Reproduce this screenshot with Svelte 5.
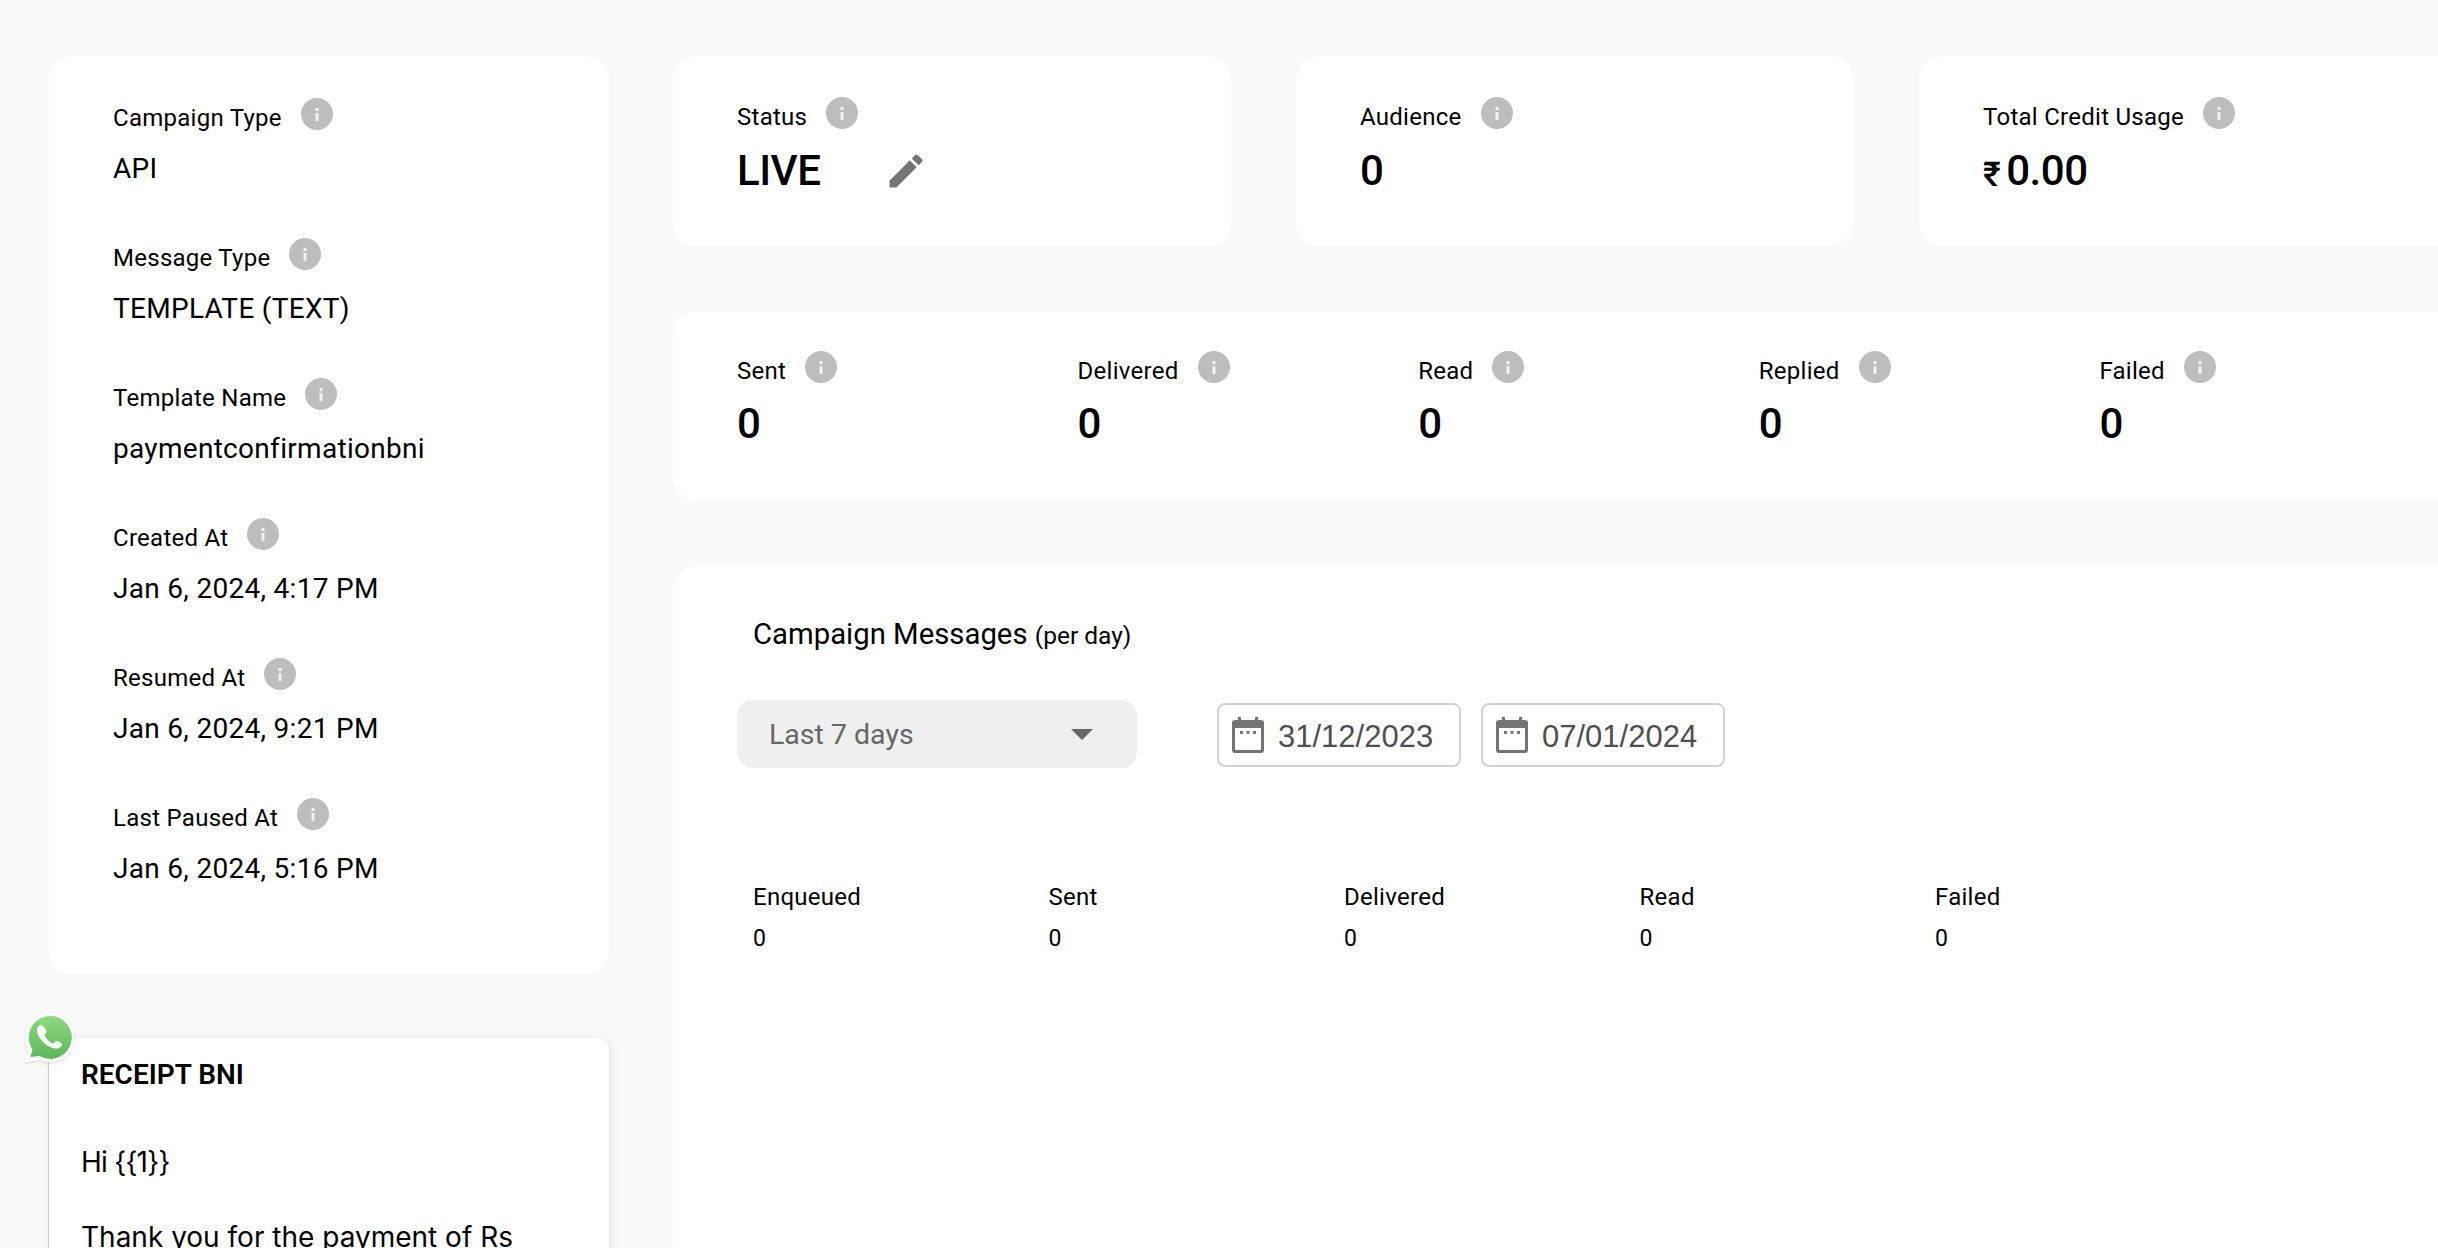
<script>
  const details = [
    { label: "Campaign Type", value: "API" },
    { label: "Message Type", value: "TEMPLATE (TEXT)" },
    { label: "Template Name", value: "paymentconfirmationbni" },
    { label: "Created At", value: "Jan 6, 2024, 4:17 PM" },
    { label: "Resumed At", value: "Jan 6, 2024, 9:21 PM" },
    { label: "Last Paused At", value: "Jan 6, 2024, 5:16 PM" }
  ];
  const funnel = ["Sent", "Delivered", "Read", "Replied", "Failed"];
  const daily = ["Enqueued", "Sent", "Delivered", "Read", "Failed"];
  const dates = ["31/12/2023", "07/01/2024"];
</script>

{#snippet info()}
  <svg class="info" viewBox="0 0 32 32" aria-hidden="true">
    <circle cx="16" cy="16" r="16" fill="#bdbdbd" />
    <rect x="14.5" y="15" width="3" height="8" fill="#f2f2f2" />
    <rect x="14.5" y="10" width="3" height="3" fill="#f2f2f2" />
  </svg>
{/snippet}

<div class="page">
  <aside class="left">
    <section class="card details">
      {#each details as item}
        <div class="detail">
          <div class="label">{item.label}{@render info()}</div>
          <div class="value">{item.value}</div>
        </div>
      {/each}
    </section>

    <section class="template">
      <svg class="wa" viewBox="0 0 50 52" aria-hidden="true">
        <defs>
          <linearGradient id="wag" x1="0" y1="0" x2="0" y2="1">
            <stop offset="0" stop-color="#8fd880" />
            <stop offset="1" stop-color="#5cb85a" />
          </linearGradient>
        </defs>
        <path d="M0 51 L4.500 38.500 A25 25 0 1 1 15 48 Z" fill="#fff" />
        <path d="M6.500 45 L8.500 37.500 A21.500 21.500 0 1 1 15.500 44 Z" fill="url(#wag)" />
        <path d="M17 13 C15 13 12.500 15.500 13 19.500 C14 26 22.500 35.500 31 36.500 C35 37 38 34.500 38 32.500 C38 31 33.500 28.500 32 29 C30.500 29.500 30 31.500 29 31.500 C26.500 31.500 21 25.500 20.500 23 C20.500 22 22.500 21 22.500 19.500 C22.500 18 19 13 17 13 Z" fill="#fff" />
      </svg>
      <h3>RECEIPT BNI</h3>
      <p class="hi">Hi &#123;&#123;1&#125;&#125;</p>
      <p>Thank you for the payment of Rs</p>
    </section>
  </aside>

  <main class="right">
    <div class="top">
      <section class="card stat">
        <div class="label">Status{@render info()}</div>
        <div class="big">
          LIVE
          <svg class="pencil" viewBox="0 0 24 24" aria-hidden="true">
            <path d="M3 17.250V21h3.750L17.810 9.940l-3.750-3.750L3 17.250zM20.710 7.040c.390-.390.390-1.020 0-1.410l-2.340-2.340c-.390-.390-1.020-.390-1.410 0l-1.830 1.830 3.750 3.750 1.830-1.830z" fill="#757575" />
          </svg>
        </div>
      </section>
      <section class="card stat">
        <div class="label">Audience{@render info()}</div>
        <div class="big">0</div>
      </section>
      <section class="card stat">
        <div class="label">Total Credit Usage{@render info()}</div>
        <div class="big"><span class="rupee">₹</span>0.00</div>
      </section>
    </div>

    <section class="card funnel">
      {#each funnel as name}
        <div class="funnel-item">
          <div class="label">{name}{@render info()}</div>
          <div class="count">0</div>
        </div>
      {/each}
    </section>

    <section class="card chart">
      <h2>Campaign Messages <small>(per day)</small></h2>
      <div class="filters">
        <div class="select">
          <span>Last 7 days</span>
          <span class="caret"></span>
        </div>
        {#each dates as date}
          <div class="date">
            <svg class="cal" viewBox="0 0 32 36" aria-hidden="true">
              <path d="M6 0h3v3h14V0h3v3h3a3 3 0 0 1 3 3v27a3 3 0 0 1-3 3H3a3 3 0 0 1-3-3V6a3 3 0 0 1 3-3h3z" fill="#757575" />
              <rect x="3" y="11" width="26" height="22" rx="1" fill="#fff" />
              <rect x="8" y="14" width="3" height="3" fill="#757575" />
              <rect x="14.500" y="14" width="3" height="3" fill="#757575" />
              <rect x="21" y="14" width="3" height="3" fill="#757575" />
            </svg>
            <span>{date}</span>
          </div>
        {/each}
      </div>
      <div class="daily">
        {#each daily as name}
          <div class="daily-item">
            <div class="daily-name">{name}</div>
            <div class="daily-count">0</div>
          </div>
        {/each}
      </div>
    </section>
  </main>
</div>

<style>
  :global(body) {
    background: #f9f9f9;
    overflow: hidden;
  }

  .page {
    display: flex;
    gap: 64px;
    height: 1248px;
    padding: 56px 0 0 49px;
    box-sizing: border-box;
    overflow: hidden;
    font-family: Roboto, sans-serif;
    color: #000;
  }

  .left {
    flex: 0 0 560px;
  }

  .right {
    flex: 0 0 1900px;
    display: flex;
    flex-direction: column;
    gap: 65px;
  }

  .card {
    background: #fff;
    border-radius: 24px;
  }

  .details {
    box-sizing: border-box;
    height: 918px;
    padding: 46px 64px 0;
    display: flex;
    flex-direction: column;
    gap: 55px;
  }

  .label {
    display: flex;
    align-items: center;
    gap: 19px;
    height: 32px;
    font-size: 24px;
    letter-spacing: 0.27px;
    line-height: 32px;
  }

  .label :global(svg.info) {
    flex: none;
    width: 32px;
    height: 32px;
    transform: translateY(-4px);
  }

  .value {
    margin-top: 17px;
    font-size: 28px;
    line-height: 36px;
    letter-spacing: 0.3px;
    white-space: nowrap;
  }

  .template {
    position: relative;
    margin-top: 64px;
    height: 400px;
    padding: 20px 32px;
    box-sizing: border-box;
    background: #fff;
    border-radius: 12px;
    box-shadow: -1px 0 0 rgba(0, 0, 0, 0.14), 2px 2px 8px rgba(0, 0, 0, 0.1);
    font-family: Inter, sans-serif;
    font-size: 28px;
  }

  .wa {
    position: absolute;
    left: -25px;
    top: -26px;
    width: 50px;
    height: 52px;
    filter: drop-shadow(0 1px 1px rgba(0, 0, 0, 0.15));
  }

  h3 {
    margin: 0;
    font-family: Roboto, sans-serif;
    font-size: 28px;
    line-height: 34px;
    font-weight: 600;
  }

  .template p {
    margin: 52px 0 0;
    line-height: 36px;
    white-space: nowrap;
  }

  .template p + p {
    margin-top: 39px;
  }

  .template .hi {
    letter-spacing: -0.75px;
  }

  .top {
    display: flex;
    flex: none;
    gap: 65px;
  }

  .stat {
    box-sizing: border-box;
    flex: 0 0 558px;
    height: 190px;
    padding: 45px 64px 0;
  }

  .big {
    display: flex;
    align-items: center;
    margin-top: 10px;
    font-size: 42px;
    line-height: 56px;
    font-weight: 500;
    letter-spacing: -0.5px;
  }

  .rupee {
    font-size: 34px;
    margin-right: 6px;
    transform: translateY(3px);
  }

  .pencil {
    width: 44px;
    height: 44px;
    margin-left: 64px;
  }

  .funnel {
    box-sizing: border-box;
    flex: none;
    height: 190px;
    padding: 44px 64px 0;
    display: flex;
  }

  .funnel-item {
    flex: 0 0 340.6px;
  }

  .count {
    margin-top: 9px;
    font-size: 42px;
    line-height: 56px;
    font-weight: 500;
  }

  .chart {
    flex: none;
    height: 900px;
    padding: 49px 64px 0;
    box-sizing: border-box;
  }

  h2 {
    margin: 0 0 0 16px;
    font-size: 29.300px;
    line-height: 38px;
    font-weight: 400;
  }

  h2 small {
    font-size: 24.500px;
  }

  .filters {
    display: flex;
    align-items: center;
    margin-top: 45px;
    gap: 20px;
  }

  .select {
    box-sizing: border-box;
    display: flex;
    align-items: center;
    justify-content: space-between;
    width: 400px;
    height: 68px;
    margin-right: 60px;
    padding: 0 44px 0 32px;
    background: #efefef;
    border-radius: 16px;
    color: #666;
    font-size: 28.500px;
  }

  .caret {
    border-left: 11px solid transparent;
    border-right: 11px solid transparent;
    border-top: 11px solid #666;
  }

  .date {
    box-sizing: border-box;
    display: flex;
    align-items: center;
    gap: 14px;
    width: 244px;
    height: 64px;
    margin-top: 2px;
    padding-left: 13px;
    border: 2px solid #d3d3d3;
    border-radius: 8px;
    color: #4f4f4f;
    font-family: "Liberation Sans", sans-serif;
    font-size: 31px;
  }

  .date span {
    padding-top: 4px;
  }

  .cal {
    width: 32px;
    height: 36px;
  }

  .daily {
    display: flex;
    margin: 113px 0 0 16px;
  }

  .daily-item {
    flex: 0 0 295.5px;
  }

  .daily-name {
    font-size: 24px;
    letter-spacing: 0.27px;
    line-height: 32px;
  }

  .daily-count {
    margin-top: 10px;
    font-size: 23px;
    line-height: 32px;
  }
</style>
